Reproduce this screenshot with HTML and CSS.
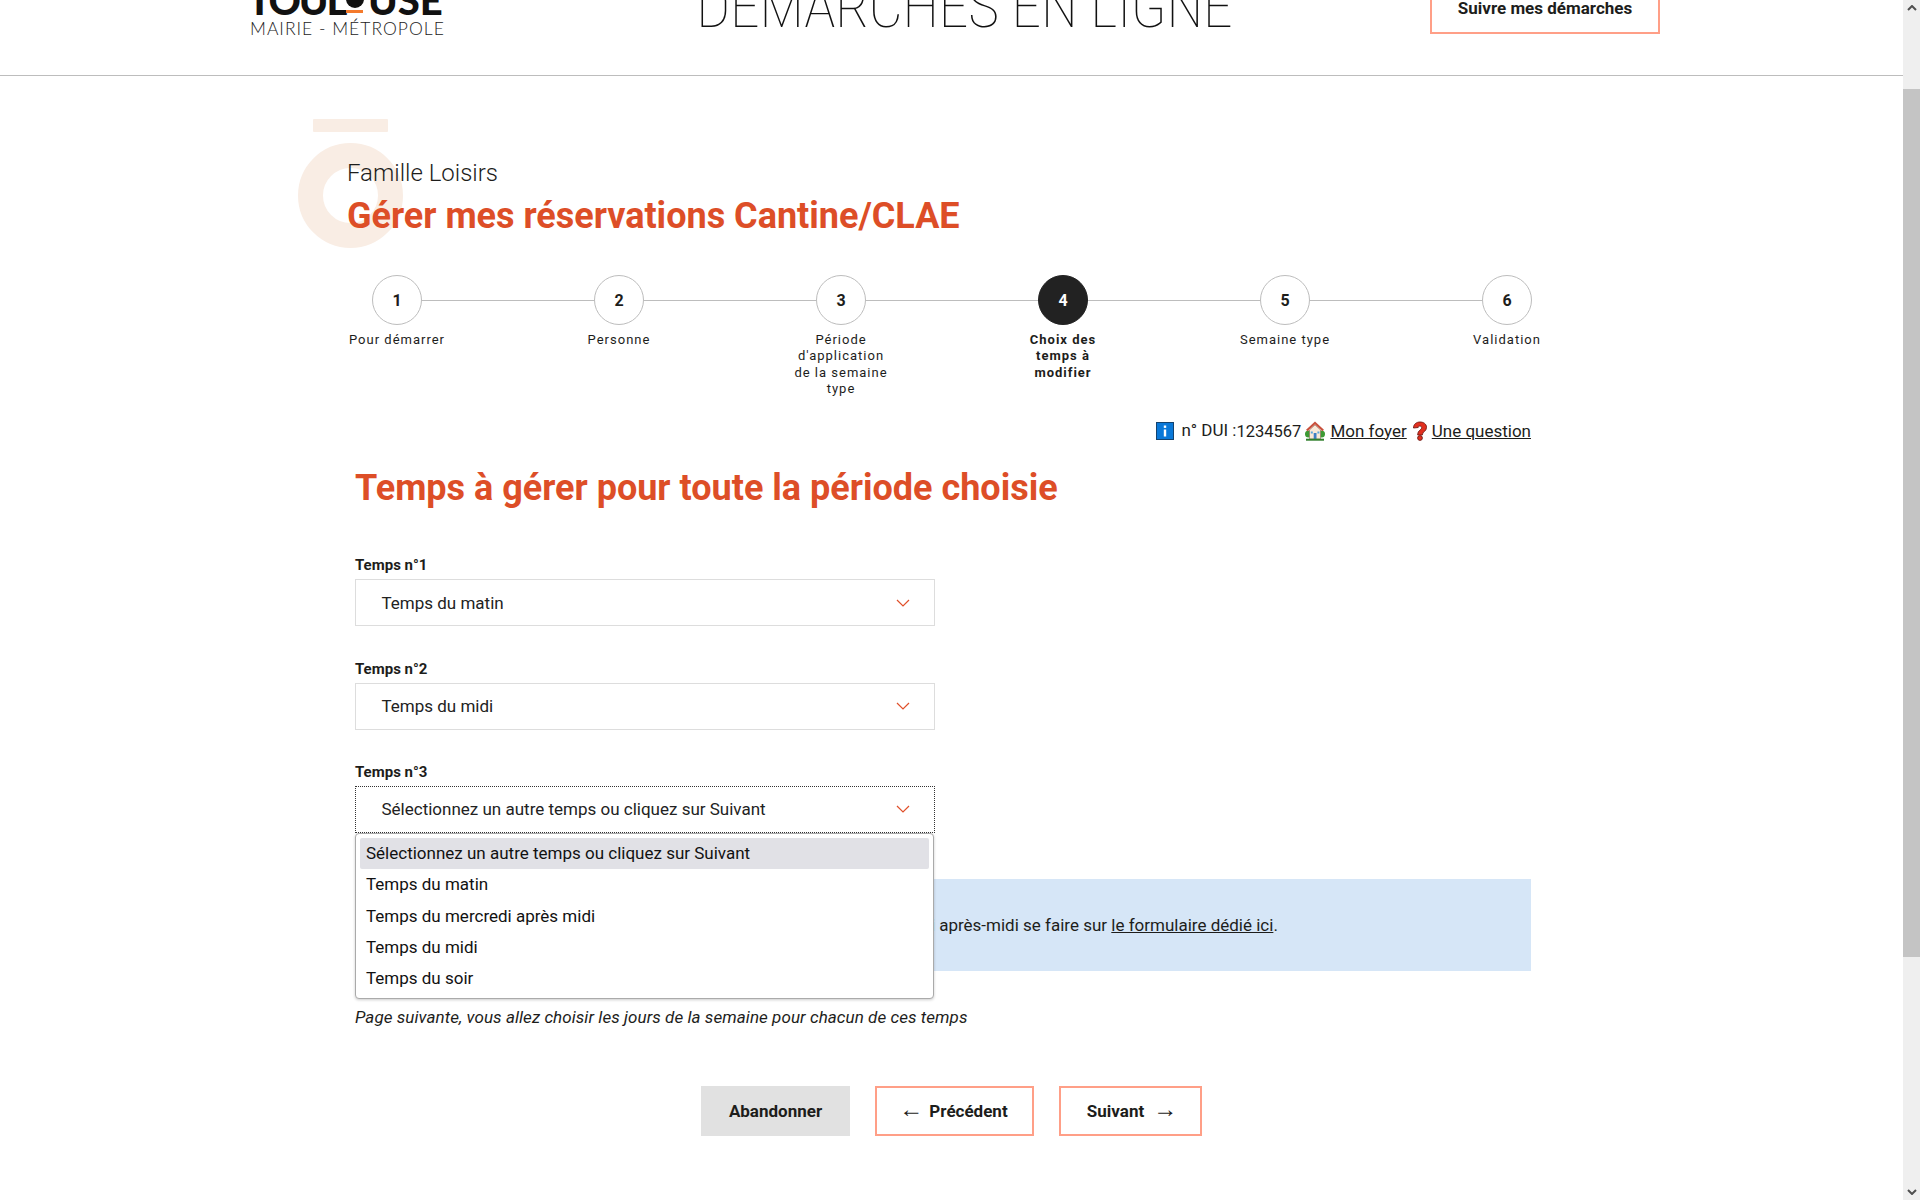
FILE: index.html
```html
<!DOCTYPE html>
<html lang="fr">
<head>
<meta charset="utf-8">
<title>Démarches en ligne</title>
<link rel="stylesheet" href="styles.css">
</head>
<body>
<div class="window">
  <div class="page">
    <header class="site-header">
      <div class="logo">
        <div class="logo-name"><span class="logo-start">TOUL</span><span class="logo-o"></span><span>USE</span></div>
        <div class="logo-sub">MAIRIE - MÉTROPOLE</div>
      </div>
      <div class="site-title">DÉMARCHES EN LIGNE</div>
      <a class="track-btn">Suivre mes démarches</a>
    </header>

    <main class="content">
      <section class="intro">
        <svg class="deco" viewBox="0 0 105 129" aria-hidden="true">
          <rect x="15" y="0" width="75" height="13" rx="1" fill="#f9ede4"/>
          <circle cx="52.5" cy="76.5" r="40" fill="none" stroke="#f9ede4" stroke-width="25"/>
        </svg>
        <div class="intro-sub">Famille Loisirs</div>
        <h1 class="intro-title">Gérer mes réservations Cantine/CLAE</h1>
      </section>

      <ol class="steps">
        <li class="step"><span class="dot">1</span><span class="step-label">Pour démarrer</span></li>
        <li class="step"><span class="dot">2</span><span class="step-label">Personne</span></li>
        <li class="step"><span class="dot">3</span><span class="step-label">Période d'application de la semaine type</span></li>
        <li class="step step-on"><span class="dot">4</span><span class="step-label">Choix des temps à modifier</span></li>
        <li class="step"><span class="dot">5</span><span class="step-label">Semaine type</span></li>
        <li class="step"><span class="dot">6</span><span class="step-label">Validation</span></li>
      </ol>

      <div class="infos">
        <svg class="ico ico-i" viewBox="0 0 18 18" aria-hidden="true"><rect x="0.5" y="0.5" width="17" height="17" fill="#0a78d8" stroke="#14436f"/><rect x="7.800" y="3.500" width="2.400" height="2.400" fill="#fff"/><rect x="7.800" y="7.500" width="2.400" height="7" fill="#fff"/></svg>
        <span class="dui">n° DUI :<span class="dui-num">1234567</span></span>
        <svg class="ico ico-house" viewBox="0 0 20 20" aria-hidden="true"><circle cx="3.500" cy="13" r="3.500" fill="#3c9a34"/><circle cx="16.500" cy="13" r="3.500" fill="#3c9a34"/><path d="M4.500 9 10 4l5.500 5v9h-11z" fill="#f9e9d8" stroke="#8a6a58" stroke-width=".6"/><path d="M1.800 9.500 10 2l8.200 7.500" fill="none" stroke="#c8503c" stroke-width="2.200"/><rect x="8.700" y="12" width="2.800" height="6" fill="#3f7fc4"/><rect x="5.800" y="10.500" width="2" height="2" fill="#58a6dc"/><rect x="12.400" y="10.500" width="2" height="2" fill="#58a6dc"/><path d="M1 18.700h18" stroke="#2f7f2a" stroke-width="2"/></svg>
        <a class="link">Mon foyer</a>
        <svg class="ico ico-q" viewBox="0 0 16 20" aria-hidden="true"><path d="M1.500 7C1.500 3.200 4.400 1 8 1s6.500 2 6.500 5.300c0 4.300-4.200 4.200-4.200 7.700H5.700c0-5 4-5 4-7.400 0-.9-.7-1.500-1.700-1.500S6.200 4.900 6.200 6.500z" fill="#e2301f" stroke="#6f1a14" stroke-width=".9"/><circle cx="8" cy="17" r="2.400" fill="#e2301f" stroke="#6f1a14" stroke-width=".9"/></svg>
        <a class="link">Une question</a>
      </div>

      <h2 class="section-title">Temps à gérer pour toute la période choisie</h2>

      <div class="fields">
        <div class="field">
          <label class="field-label">Temps n°1</label>
          <div class="select"><span>Temps du matin</span><svg class="chev" viewBox="0 0 14 8" aria-hidden="true"><path d="M1 1l6 6 6-6" fill="none" stroke="#e0502a" stroke-width="1.200"/></svg></div>
        </div>
        <div class="field">
          <label class="field-label">Temps n°2</label>
          <div class="select"><span>Temps du midi</span><svg class="chev" viewBox="0 0 14 8" aria-hidden="true"><path d="M1 1l6 6 6-6" fill="none" stroke="#e0502a" stroke-width="1.200"/></svg></div>
        </div>
        <div class="field">
          <label class="field-label">Temps n°3</label>
          <div class="select select-focus"><span>Sélectionnez un autre temps ou cliquez sur Suivant</span><svg class="chev" viewBox="0 0 14 8" aria-hidden="true"><path d="M1 1l6 6 6-6" fill="none" stroke="#e0502a" stroke-width="1.200"/></svg></div>
          <ul class="menu">
            <li class="menu-item menu-item-on">Sélectionnez un autre temps ou cliquez sur Suivant</li>
            <li class="menu-item">Temps du matin</li>
            <li class="menu-item">Temps du mercredi après midi</li>
            <li class="menu-item">Temps du midi</li>
            <li class="menu-item">Temps du soir</li>
          </ul>
        </div>
      </div>

      <div class="notice"><p>Attention : la modification des réservations du temps du mercredi après-midi se faire sur <a class="link">le formulaire dédié ici</a>.</p></div>

      <p class="hint">Page suivante, vous allez choisir les jours de la semaine pour chacun de ces temps</p>

      <div class="actions">
        <a class="btn btn-grey">Abandonner</a>
        <a class="btn btn-line btn-prev"><span class="arrow">←</span>Précédent</a>
        <a class="btn btn-line btn-next">Suivant<span class="arrow">→</span></a>
      </div>
    </main>
  </div>
  <div class="scrollbar" aria-hidden="true">
    <svg class="sb-arrow" viewBox="0 0 10 6"><path d="M1 5l4-4 4 4" fill="none" stroke="#505050" stroke-width="2"/></svg>
    <div class="sb-track"><div class="sb-thumb"></div></div>
    <svg class="sb-arrow" viewBox="0 0 10 6"><path d="M1 1l4 4 4-4" fill="none" stroke="#505050" stroke-width="2"/></svg>
  </div>
</div>
</body>
</html>
```
FILE: styles.css
```css
* { box-sizing: border-box; }
html, body { margin: 0; height: 100%; overflow: hidden; }
body { font-family: Roboto, "Liberation Sans", sans-serif; color: #1d1d1b; background: #fff; font-size: 17px; }
.window { display: flex; height: 1200px; }
.page { flex: 1; min-width: 0; overflow: hidden; }

/* Header, scrolled partly out of view */
.site-header { height: 76px; border-bottom: 1px solid #bdbdbd; display: flex; align-items: flex-end; padding: 0 243px 0 250px; overflow: hidden; }
.logo { width: 193px; flex: none; margin-bottom: 38px; }
.logo-name { display: flex; height: 42px; font-family: Lato, sans-serif; font-weight: 900; font-size: 40px; line-height: 42px; color: #111; white-space: nowrap; }
.logo-start { width: 94.500px; margin-left: -2.500px; flex: none; letter-spacing: -2.200px; }
.logo-o { width: 26px; height: 42px; flex: none; position: relative; }
.logo-o::before { content: ""; position: absolute; left: 3.500px; bottom: 13px; width: 18px; height: 18px; border-radius: 50%; background: #111; }
.logo-o::after { content: ""; position: absolute; left: 4px; width: 17px; bottom: 8px; height: 3px; background: #f47a2c; }
.logo-sub { font-family: Lato, sans-serif; font-weight: 300; font-size: 17.500px; line-height: 16px; letter-spacing: 1px; color: #222; white-space: nowrap; }
.site-title { margin: 0 0 38px 253px; font-weight: 100; font-stretch: condensed; font-size: 60px; line-height: 60px; letter-spacing: -.6px; color: #111; white-space: nowrap; }
.track-btn { width: 230px; height: 52px; flex: none; margin: 0 0 41px auto; padding-top: 1px; border: 2px solid #ff9f87; border-top: 0; display: flex; align-items: center; justify-content: center; font-weight: 700; font-size: 17px; color: #1d1d1b; }

.content { padding: 0 372px 0 355px; }

/* Intro */
.intro { position: relative; height: 199px; }
.deco { position: absolute; left: -57px; top: 43px; width: 105px; height: 129px; }
.intro-sub { position: relative; margin-left: -8px; padding-top: 83px; font-weight: 300; font-size: 24px; line-height: 28px; }
.intro-title { position: relative; margin: 8px 0 0 -8px; color: #dd4e27; font-weight: 700; font-size: 36px; line-height: 42px; white-space: nowrap; }

/* Steps */
.steps { list-style: none; margin: 0 0 0 -69px; padding: 0; display: flex; width: 1332px; position: relative; }
.steps::before { content: ""; position: absolute; left: 111px; width: 1109px; top: 25px; height: 1px; background: #bdbdbd; }
.step { width: 222px; flex: none; display: flex; flex-direction: column; align-items: center; position: relative; padding: 0 60px; }
.dot { width: 50px; height: 50px; border-radius: 50%; border: 1px solid #bdbdbd; background: #fff; display: flex; align-items: center; justify-content: center; font-weight: 700; font-size: 16px; flex: none; }
.step-label { margin-top: 7px; text-align: center; font-size: 13px; line-height: 16.300px; letter-spacing: 1px; }
.step-on .dot { background: #222; color: #fff; border-color: #222; }
.step-on .step-label { font-weight: 700; }

/* Info line */
.infos { margin-top: 22px; display: flex; justify-content: flex-end; align-items: center; gap: 4px; font-size: 17px; line-height: 22px; white-space: nowrap; }
.ico { width: 20px; height: 20px; flex: none; }
.ico-i { width: 18px; height: 18px; margin-right: 3px; }
.ico-house { margin-right: 1px; }
.ico-q { width: 16px; margin-left: 1px; }
.dui-num { position: relative; top: 1px; font-size: 16.500px; }
.link { color: #1d1d1b; text-decoration: underline; }

.section-title { margin: 25px 0 0; color: #dd4e27; font-weight: 700; font-size: 36px; line-height: 42px; white-space: nowrap; }

/* Fields */
.fields { margin-top: 47px; display: flex; flex-direction: column; gap: 33.500px; width: 580px; }
.field { position: relative; }
.field-label { display: block; font-weight: 700; font-size: 15px; line-height: 18px; margin-bottom: 5px; }
.select { height: 47px; border: 1px solid #ddd; display: flex; align-items: center; justify-content: space-between; padding: 0 24px 0 25.500px; color: #222; }
.select-focus { border: 1px dotted #333; padding-bottom: 2px; }
.chev { width: 14px; height: 8px; flex: none; }
.menu { position: absolute; z-index: 5; left: 0; top: 70px; width: 579px; height: 166px; margin: 0; padding: 4px; list-style: none; background: #fff; border: 1px solid #aaa; border-radius: 4px; box-shadow: 0 1px 3px rgba(0,0,0,.2); }
.menu-item { height: 31.250px; line-height: 31px; padding-left: 6px; color: #111; white-space: nowrap; }
.menu-item-on { background: #e1e1e6; border-radius: 2px; }

.notice { margin-top: 46px; height: 92px; background: #d6e6f7; display: flex; align-items: center; }
.notice p { margin: 0; padding-left: 87.500px; white-space: nowrap; }

.hint { margin: 35px 0 0; font-style: italic; line-height: 22px; letter-spacing: .065px; }

.actions { margin: 58px 0 0 346px; display: flex; gap: 25px; }
.btn { height: 50px; display: flex; align-items: center; justify-content: center; font-weight: 700; color: #1d1d1b; }
.btn-grey { width: 149px; background: #e1e1e1; }
.btn-line { border: 2px solid #ff9f87; }
.btn-prev { width: 159px; padding-right: 2px; }
.btn-next { width: 143px; padding-left: 3px; }
.arrow { font-weight: 300; font-size: 24px; line-height: 20px; position: relative; top: -2px; }
.btn-prev .arrow { margin-right: 6px; }
.btn-next .arrow { margin-left: 9px; }

/* Scrollbar */
.scrollbar { width: 17px; flex: none; background: #efefef; display: flex; flex-direction: column; height: 100%; }
.sb-arrow { width: 10px; height: 6px; margin: 5px auto 5px; flex: none; display: block; }
.sb-track { flex: 1; min-height: 0; }
.sb-thumb { margin-top: 73px; height: 868px; background: #c4c4c4; }
```
